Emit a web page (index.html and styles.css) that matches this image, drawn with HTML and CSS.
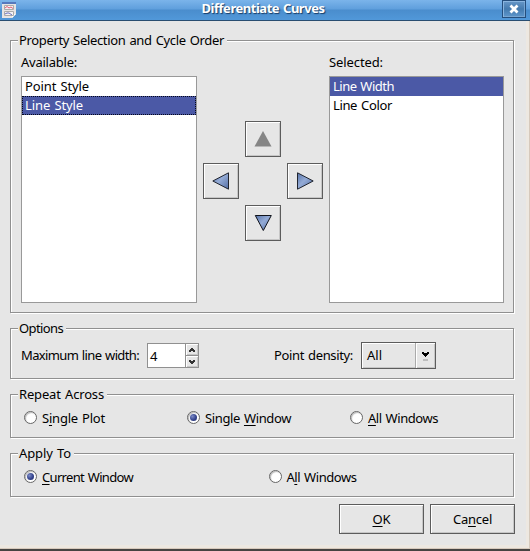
FILE: index.html
```html
<!DOCTYPE html>
<html lang="en">
<head>
<meta charset="utf-8">
<title>Differentiate Curves</title>
<link rel="stylesheet" href="styles.css">
</head>
<body>
<div class="window">
  <header class="titlebar">
    <svg class="app-icon" width="14" height="16" viewBox="0 0 14 16">
      <path d="M0 0H14V12L10 16H0Z" fill="#e6e4e4"/>
      <path d="M0 0H14V2H0Z" fill="#5579bd"/>
      <path d="M14 12H10V16Z" fill="#fff"/>
      <path d="M2.500 3.500H11.500V7.500H2.500ZM2.500 9.500H11.500V13.500H2.500Z" fill="#f5f2f4" stroke="#aaa"/>
      <path d="M3 6L5 4.500L7 6L9 5L11 6.500" fill="none" stroke="#e45b70"/>
      <path d="M3 12L5 11L7 11L10 13" fill="none" stroke="#6470bc"/>
    </svg>
    <h1><span class="t" data-w="123">Differentiate Curves</span></h1>
    <button class="close"><svg width="10" height="10" viewBox="0 0 10 10"><path d="M1.500 1.500L8.500 8.500M8.500 1.500L1.500 8.500" stroke="#fff" stroke-width="2.800"/></svg></button>
  </header>
  <main>
    <section class="group properties">
      <h2><span class="t" data-w="205">Property Selection and Cycle Order</span></h2>
      <div class="column available">
        <label><span class="t" data-w="56">Available:</span></label>
        <ul class="list">
          <li><span class="t" data-w="64">Point Style</span></li>
          <li class="selected focused"><span class="t" data-w="58">Line Style</span></li>
        </ul>
      </div>
      <div class="arrows">
        <button class="up"><svg width="18" height="18" viewBox="0 0 18 18"><path d="M9 1L17.500 16.500H.500Z" fill="#858585"/></svg></button>
        <button class="left"><svg width="18" height="18" viewBox="0 0 18 18"><path d="M.8 9L16.500 .8V17.200Z" fill="url(#blue)" stroke="#20242e"/></svg></button>
        <button class="right"><svg width="18" height="18" viewBox="0 0 18 18"><path d="M17.200 9L1.500 .8V17.200Z" fill="url(#blue)" stroke="#20242e"/></svg></button>
        <button class="down"><svg width="18" height="18" viewBox="0 0 18 18"><defs><linearGradient id="blue" x1="0" y1="0" x2="1" y2="1"><stop offset="0" stop-color="#5874a9"/><stop offset=".45" stop-color="#94abd6"/><stop offset="1" stop-color="#526da3"/></linearGradient></defs><path d="M9.300 16.500L1.300 1.500H17.300Z" fill="url(#blue)" stroke="#10131b"/></svg></button>
      </div>
      <div class="column">
        <label><span class="t" data-w="54">Selected:</span></label>
        <ul class="list">
          <li class="selected"><span class="t" data-w="61">Line Width</span></li>
          <li><span class="t" data-w="59">Line Color</span></li>
        </ul>
      </div>
    </section>

    <section class="group options">
      <h2><span class="t" data-w="44">Options</span></h2>
      <label class="width-label"><span class="t" data-w="118">Maximum line width:</span></label>
      <div class="spinner">
        <span class="value">4</span>
        <div class="steps">
          <button><svg width="6" height="4" viewBox="0 0 6 4" shape-rendering="crispEdges"><path d="M2 0H4V1H5V2H6V4H4V3H2V4H0V2H1V1H2Z" fill="#333"/></svg></button>
          <button><svg width="6" height="4" viewBox="0 0 6 4" shape-rendering="crispEdges"><path d="M2 4H4V3H5V2H6V0H4V1H2V0H0V2H1V3H2Z" fill="#333"/></svg></button>
        </div>
      </div>
      <label class="density-label"><span class="t" data-w="79">Point density:</span></label>
      <div class="combo">
        <span class="choice"><span class="t" data-w="15">All</span></span>
        <span class="drop"><svg width="7" height="9" viewBox="0 0 7 9" shape-rendering="crispEdges"><path d="M0 0H2V1H5V0H7V2H6V3H5V4H4V5H3V4H2V3H1V2H0Z"/><path d="M1 7H6V9H1Z" fill="#bdbdbd"/></svg></span>
      </div>
    </section>

    <section class="group repeat">
      <h2><span class="t" data-w="85">Repeat Across</span></h2>
      <label class="radio"><i></i><span class="t" data-w="63">S<u>i</u>ngle Plot</span></label>
      <label class="radio on"><i></i><span class="t" data-w="86">Single <u>W</u>indow</span></label>
      <label class="radio"><i></i><span class="t" data-w="70"><u>A</u>ll Windows</span></label>
    </section>

    <section class="group apply">
      <h2><span class="t" data-w="52">Apply To</span></h2>
      <label class="radio on"><i></i><span class="t" data-w="91"><u>C</u>urrent Window</span></label>
      <label class="radio"><i></i><span class="t" data-w="70">A<u>l</u>l Windows</span></label>
    </section>

    <footer>
      <button class="action"><span class="t" data-w="18"><u>O</u>K</span></button>
      <button class="action"><span class="t" data-w="39">Ca<u>n</u>cel</span></button>
    </footer>
  </main>
</div>
<script src="fit.js"></script>
</body>
</html>
```
FILE: styles.css
```css
* { box-sizing: border-box; }
body { margin: 0; font: 13px/16px "Noto Sans", "Liberation Sans", sans-serif; color: #000; }
h1, h2, ul { margin: 0; padding: 0; font-size: inherit; font-weight: normal; list-style: none; }
button { margin: 0; padding: 0; font: inherit; color: inherit; border: 0; background: none; }
svg { display: block; }
label, .t { white-space: nowrap; }
.t { display: inline-block; word-spacing: 1px; }
u { text-underline-offset: 2px; text-decoration-thickness: 1px; text-decoration-skip-ink: none; }

.window { height: 551px; background: #e6e6e6; border-bottom: 2px solid #454342; display: flex; flex-direction: column; }
.titlebar { height: 21px; flex: none; display: flex; align-items: flex-start; justify-content: space-between; padding: 0 4px 0 2px; border-bottom: 1px solid #294d70; background: linear-gradient(#7bb4ea 0, #5f9fdd 9px, #4a8dcd 10px, #5198d9 20px); }
.app-icon { margin-top: 2px; }
h1 { width: 124px; margin-left: 9px; font: bold 13px/17px "Noto Sans", sans-serif; color: #fff; text-shadow: 1px 1px 1px #173c66; }
.close { width: 24px; height: 18px; display: grid; place-items: center; border: 1px solid #254e7c; box-shadow: inset 1px 1px #8ab5df, inset -1px -1px #77a5d1; background: linear-gradient(#6898c8, #447aae 50%, #5e96cc); }
main { flex: 1; padding: 19px 11px 0 10px; border-right: 1px solid #d6c9bc; border-bottom: 1px solid #d6c9bc; box-shadow: inset -3px -3px #ede8e1; }

.group { position: relative; width: 504px; display: flex; border: 1px solid #909090; box-shadow: inset 1px 1px #fff, 1px 1px #fff; margin-bottom: 15px; }
.group h2 { position: absolute; left: 7px; top: -9px; padding: 0 3px 0 1px; background: #e6e6e6; }
.properties { height: 273px; padding: 13px 0 0 10px; }
.column { width: 175px; }
.column.available { width: 176px; }
.column label { display: block; height: 22px; }
.list { height: 227px; background: #fff; border: 1px solid #999; }
.list li { height: 19px; padding: 1px 3px; }
.selected { background: #4b59a6; color: #fff; }
.focused { outline: 1px dotted #05081c; outline-offset: -1px; }
.arrows { display: grid; grid-template: repeat(3, 36px) / repeat(3, 36px); gap: 6px; margin: 67px 6px 0; }
.arrows button, .action { display: grid; place-items: center; border: 1px solid #5c5c5c; box-shadow: inset 1px 1px #fff, inset -1px -1px #c6c6c6; }
.up { grid-area: 1 / 2; }
.left { grid-area: 2 / 1; }
.right { grid-area: 2 / 3; }
.down { grid-area: 3 / 2; }

.options { height: 51px; align-items: flex-start; padding: 13px 0 0 10px; }
.options label { margin-top: 5px; }
.width-label { width: 126px; }
.spinner { width: 52px; height: 25px; margin-top: 1px; display: flex; border: 1px solid #909090; background: #fff; }
.value { flex: 1; padding: 4px 0 0 2px; }
.steps { width: 13px; display: grid; grid-template-rows: 12px 11px; border-left: 1px solid #909090; }
.steps button { display: grid; place-items: center; background: #e6e6e6; box-shadow: inset 1px 1px #fff, inset -1px -1px #c6c6c6; }
.steps button:first-child { border-bottom: 1px solid #909090; }
.density-label { width: 87px; margin-left: 75px; }
.combo { width: 75px; height: 27px; display: flex; border: 1px solid #5c5c5c; box-shadow: inset 1px 1px #fff, inset -1px -1px #c6c6c6; }
.choice { width: 54px; padding: 4px 0 0 5px; border-right: 1px solid #aaa; }
.drop { flex: 1; display: grid; place-items: center; padding-top: 2px; box-shadow: inset 1px 1px #fff; }

.repeat, .apply { height: 44px; padding: 16px 0 0 13px; }
.radio { width: 163px; display: flex; align-items: flex-start; gap: 5px; height: 16px; }
.radio .t { margin-top: -1px; }
.radio i { width: 13px; height: 13px; display: grid; place-items: center; border: 1px solid #666; border-radius: 50%; background: #fff; box-shadow: inset 1px 1px 1px #bbb; }
.radio.on i::after { content: ""; width: 7px; height: 7px; border-radius: 50%; background: radial-gradient(circle at 35% 35%, #7b8ac5, #35448e 55%, #202b66); }
.apply .radio { width: 245px; }
.apply { margin-bottom: 7px; }
footer { display: flex; justify-content: flex-end; gap: 6px; width: 505px; }
.action { width: 85px; height: 30px; }
```
FILE: fit.js
```js
// Spread the letters of each label to the width given in data-w.
document.fonts.ready.then(() => {
  document.querySelectorAll('.t').forEach((el) => {
    const spare = Number(el.dataset.w) - el.getBoundingClientRect().width;
    el.style.letterSpacing = spare / el.textContent.length + 'px';
  });
});
```
